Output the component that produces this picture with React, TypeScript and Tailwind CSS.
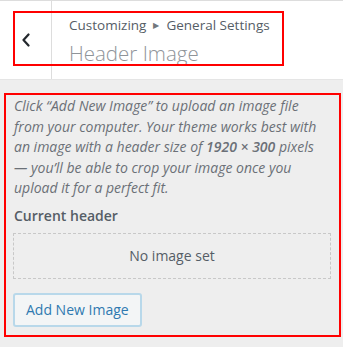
import React from "react";

const font = { fontFamily: '"Open Sans", "Noto Sans", sans-serif' };

function BackChevron() {
  return (
    <svg width="10" height="14" viewBox="0 0 10 14" fill="none">
      <path d="M7.5 1.5 L2.5 7 L7.5 12.5" stroke="#23282d" strokeWidth="2.2" strokeLinecap="round" strokeLinejoin="round" />
    </svg>
  );
}

const descLines = [
  <>Click “Add New Image” to upload an image file</>,
  <>from your computer. Your theme works best with</>,
  <>
    an image with a header size of <strong className="font-semibold">1920 × 300</strong> pixels
  </>,
  <>— you’ll be able to crop your image once you</>,
  <>upload it for a perfect fit.</>,
];

export default function App() {
  return (
    <div className="relative w-[343px] h-[347px] bg-[#eeeeee] overflow-hidden" style={font}>
      {/* section header */}
      <div className="flex h-[80px] bg-white border-t border-[#dddddd] border-b border-b-[#e5e5e5]">
        <button className="w-[52px] flex items-center justify-center border-r border-[#dddddd]">
          <BackChevron />
        </button>
        <div className="flex flex-col pl-[17px] pt-[15px]">
          <div className="flex items-center text-[13.5px] leading-[18px] text-[#555d66]">
            <span>Customizing</span>
            <span className="mx-[7px] text-[8px] text-[#72777c]">▶</span>
            <span>General Settings</span>
          </div>
          <h3 className="mt-[6px] text-[20.5px] leading-[26px] font-light text-[#8f9499]">Header Image</h3>
        </div>
      </div>

      {/* section body */}
      <div className="flex flex-col pl-[13px] pr-[12px] pt-[16px]">
        <p className="pl-[1px] text-[14px] leading-[20.5px] italic text-[#6b7077]">
          {descLines.map((l, i) => (
            <span key={i} className="block whitespace-nowrap">
              {l}
            </span>
          ))}
        </p>
        <div className="mt-[7px] text-[14px] leading-[20px] font-semibold text-[#555d66] pl-[1px]">Current header</div>
        <div className="mt-[7px] h-[46px] border border-dashed border-[#c8c8c8] flex items-center justify-center text-[14px] text-[#555d66]">
          No image set
        </div>
        <div className="mt-[14px]">
          <button className="h-[34px] px-[11px] rounded-[3px] border-2 border-[#b8d8ea] bg-[#f3f5f6] text-[14px] text-[#2f79b0]">
            Add New Image
          </button>
        </div>
      </div>

      {/* annotation boxes */}
      <div className="absolute left-[13px] top-[11px] w-[271px] h-[55px] border-2 border-[#ff0000]" />
      <div className="absolute left-[4px] top-[93px] w-[337px] h-[244px] border-2 border-[#ff0000]" />
    </div>
  );
}
